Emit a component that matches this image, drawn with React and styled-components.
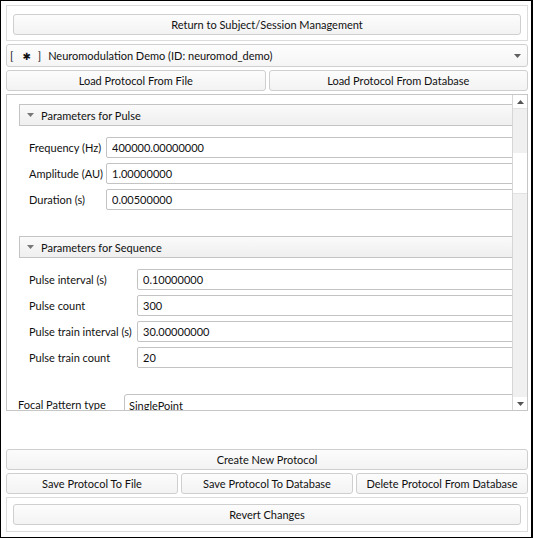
import React from 'react';
import styled, { createGlobalStyle } from 'styled-components';

const Global = createGlobalStyle`
  html, body { margin: 0; padding: 0; background: #fff; }
  body { font-family: Lato, "Liberation Sans", sans-serif; font-size: 11px; color: #000; }
`;

const FONT = 'Lato, "Liberation Sans", "DejaVu Sans", sans-serif';
const FS = '11px';

const Window = styled.div`
  box-sizing: border-box;
  width: 533px;
  height: 538px;
  border: 1px solid #000;
  border-right-width: 2px;
  padding: 4px 3px 5px 5px;
  display: flex;
  flex-direction: column;
  gap: 3px;
  background: #fff;
  font-family: ${FONT};
  font-size: ${FS};
  color: #111;
`;

const GroupBox = styled.div`
  box-sizing: border-box;
  border: 1px solid #dcdcdc;
  padding: ${p => p.$top}px 6px ${p => p.$bottom}px 6px;
`;

const Button = styled.div`
  box-sizing: border-box;
  height: 21px;
  border: 1px solid #cfcfcf;
  border-radius: 3px;
  background: linear-gradient(#fcfcfc, #f3f3f3);
  display: flex;
  align-items: center;
  justify-content: center;
  font-size: ${FS};
  white-space: nowrap;
  overflow: hidden;
`;

const ButtonRow = styled.div`
  display: grid;
  grid-template-columns: repeat(${p => p.$cols}, 1fr);
  gap: 3px;
`;

const Combo = styled.div`
  box-sizing: border-box;
  height: 23px;
  border: 1px solid #cfcfcf;
  border-radius: 3px;
  background: linear-gradient(#fdfdfd, #f5f5f5);
  display: flex;
  align-items: center;
  justify-content: space-between;
  padding: 0 6px 0 3px;
  font-size: ${FS};
  white-space: nowrap;
`;

const ComboText = styled.span`
  display: flex;
  align-items: center;
`;

const Bracket = styled.span`
  margin-right: ${p => p.$mr}px;
`;

const Star = styled.span`
  display: inline-block;
  margin-right: 7px;
  font-size: 10px;
`;

const ScrollArea = styled.div`
  box-sizing: border-box;
  height: 317px;
  flex: none;
  border: 1px solid #c6c6c6;
  display: flex;
`;

const Viewport = styled.div`
  flex: 1;
  overflow: hidden;
  background: #fff;
`;

const Content = styled.div`
  width: 560px;
  padding: 9px 0 0 12px;
  box-sizing: border-box;
`;

const Section = styled.div`
  margin-bottom: 26px;
`;

const SectionHeader = styled.div`
  box-sizing: border-box;
  height: 22px;
  border: 1px solid #c4c4c4;
  background: linear-gradient(#fafafa, #efefef);
  display: flex;
  align-items: center;
  gap: 7px;
  padding-left: 7px;
  font-size: ${FS};
`;

const Form = styled.div`
  display: grid;
  grid-template-columns: ${p => p.$label}px 1fr;
  grid-auto-rows: 21px;
  row-gap: 5px;
  padding: ${p => p.$pt}px 0 0 ${p => p.$pl}px;
  margin-left: ${p => p.$ml || 0}px;
`;

const Label = styled.div`
  display: flex;
  align-items: center;
  white-space: nowrap;
  font-size: ${FS};
`;

const Field = styled.input`
  box-sizing: border-box;
  height: 21px;
  width: 100%;
  margin: 0;
  border: 1px solid #c3c3c3;
  border-radius: 2px;
  padding: 0 5px;
  background: #fff;
  font-family: ${FONT};
  font-size: ${FS};
  color: #111;
  outline: none;
`;

const FieldCombo = styled.div`
  box-sizing: border-box;
  height: 23px;
  border: 1px solid #c3c3c3;
  border-radius: 3px;
  background: #fff;
  display: flex;
  align-items: center;
  padding-left: 4px;
  font-size: ${FS};
`;

const Scrollbar = styled.div`
  width: 14px;
  flex: none;
  border-left: 1px solid #d6d6d6;
  display: flex;
  flex-direction: column;
  background: #fff;
`;

const ScrollArrow = styled.div`
  height: 13px;
  flex: none;
  display: flex;
  align-items: center;
  justify-content: center;
  background: #fff;
`;

const ScrollSeg = styled.div`
  box-sizing: border-box;
  height: ${p => p.$h}px;
  flex: ${p => (p.$grow ? 1 : 'none')};
  background: ${p => (p.$gray ? '#f0f0f0' : '#fff')};
  border-top: 1px solid ${p => (p.$gray ? '#e2e2e2' : '#fff')};
`;

const Spacer = styled.div`
  flex: 1;
`;

const Tri = ({ up, color = '#606060', w = 7, h = 4 }) => (
  <svg width={w} height={h} viewBox="0 0 7 4" style={{ display: 'block' }}>
    <path d={up ? 'M0 4 L3.5 0 L7 4 Z' : 'M0 0 L7 0 L3.5 4 Z'} fill={color} />
  </svg>
);

const pulse = [
  ['Frequency (Hz)', '400000.00000000'],
  ['Amplitude (AU)', '1.00000000'],
  ['Duration (s)', '0.00500000'],
];

const sequence = [
  ['Pulse interval (s)', '0.10000000'],
  ['Pulse count', '300'],
  ['Pulse train interval (s)', '30.00000000'],
  ['Pulse train count', '20'],
];

const ParamSection = ({ title, rows, labelWidth }) => (
  <Section>
    <SectionHeader>
      <Tri color="#777" />
      <span>{title}</span>
    </SectionHeader>
    <Form $label={labelWidth} $pt={11} $pl={10}>
      {rows.map(([l, v]) => (
        <React.Fragment key={l}>
          <Label>{l}</Label>
          <Field readOnly defaultValue={v} />
        </React.Fragment>
      ))}
    </Form>
  </Section>
);

export default function App() {
  return (
    <>
      <Global />
      <Window>
        <GroupBox $top={8} $bottom={5}>
          <Button>Return to Subject/Session Management</Button>
        </GroupBox>
        <Combo>
          <ComboText>
            <Bracket $mr={9}>[</Bracket>
            <Star>✱</Star>
            <Bracket $mr={7}>]</Bracket>
            Neuromodulation Demo (ID: neuromod_demo)
          </ComboText>
          <Tri />
        </Combo>
        <ButtonRow $cols={2}>
          <Button>Load Protocol From File</Button>
          <Button>Load Protocol From Database</Button>
        </ButtonRow>
        <ScrollArea>
          <Viewport>
            <Content>
              <ParamSection title="Parameters for Pulse" rows={pulse} labelWidth={77} />
              <ParamSection title="Parameters for Sequence" rows={sequence} labelWidth={108} />
              <Form $label={106} $pt={0} $pl={0} $ml={-1}>
                <Label>Focal Pattern type</Label>
                <FieldCombo>SinglePoint</FieldCombo>
              </Form>
            </Content>
          </Viewport>
          <Scrollbar>
            <ScrollArrow>
              <Tri up color="#555" />
            </ScrollArrow>
            <ScrollSeg $gray $h={45} />
            <ScrollSeg $h={40} />
            <ScrollSeg $gray $grow />
            <ScrollArrow>
              <Tri color="#555" />
            </ScrollArrow>
          </Scrollbar>
        </ScrollArea>
        <Spacer />
        <Button>Create New Protocol</Button>
        <ButtonRow $cols={3}>
          <Button>Save Protocol To File</Button>
          <Button>Save Protocol To Database</Button>
          <Button>Delete Protocol From Database</Button>
        </ButtonRow>
        <GroupBox $top={6} $bottom={6}>
          <Button>Revert Changes</Button>
        </GroupBox>
      </Window>
    </>
  );
}
